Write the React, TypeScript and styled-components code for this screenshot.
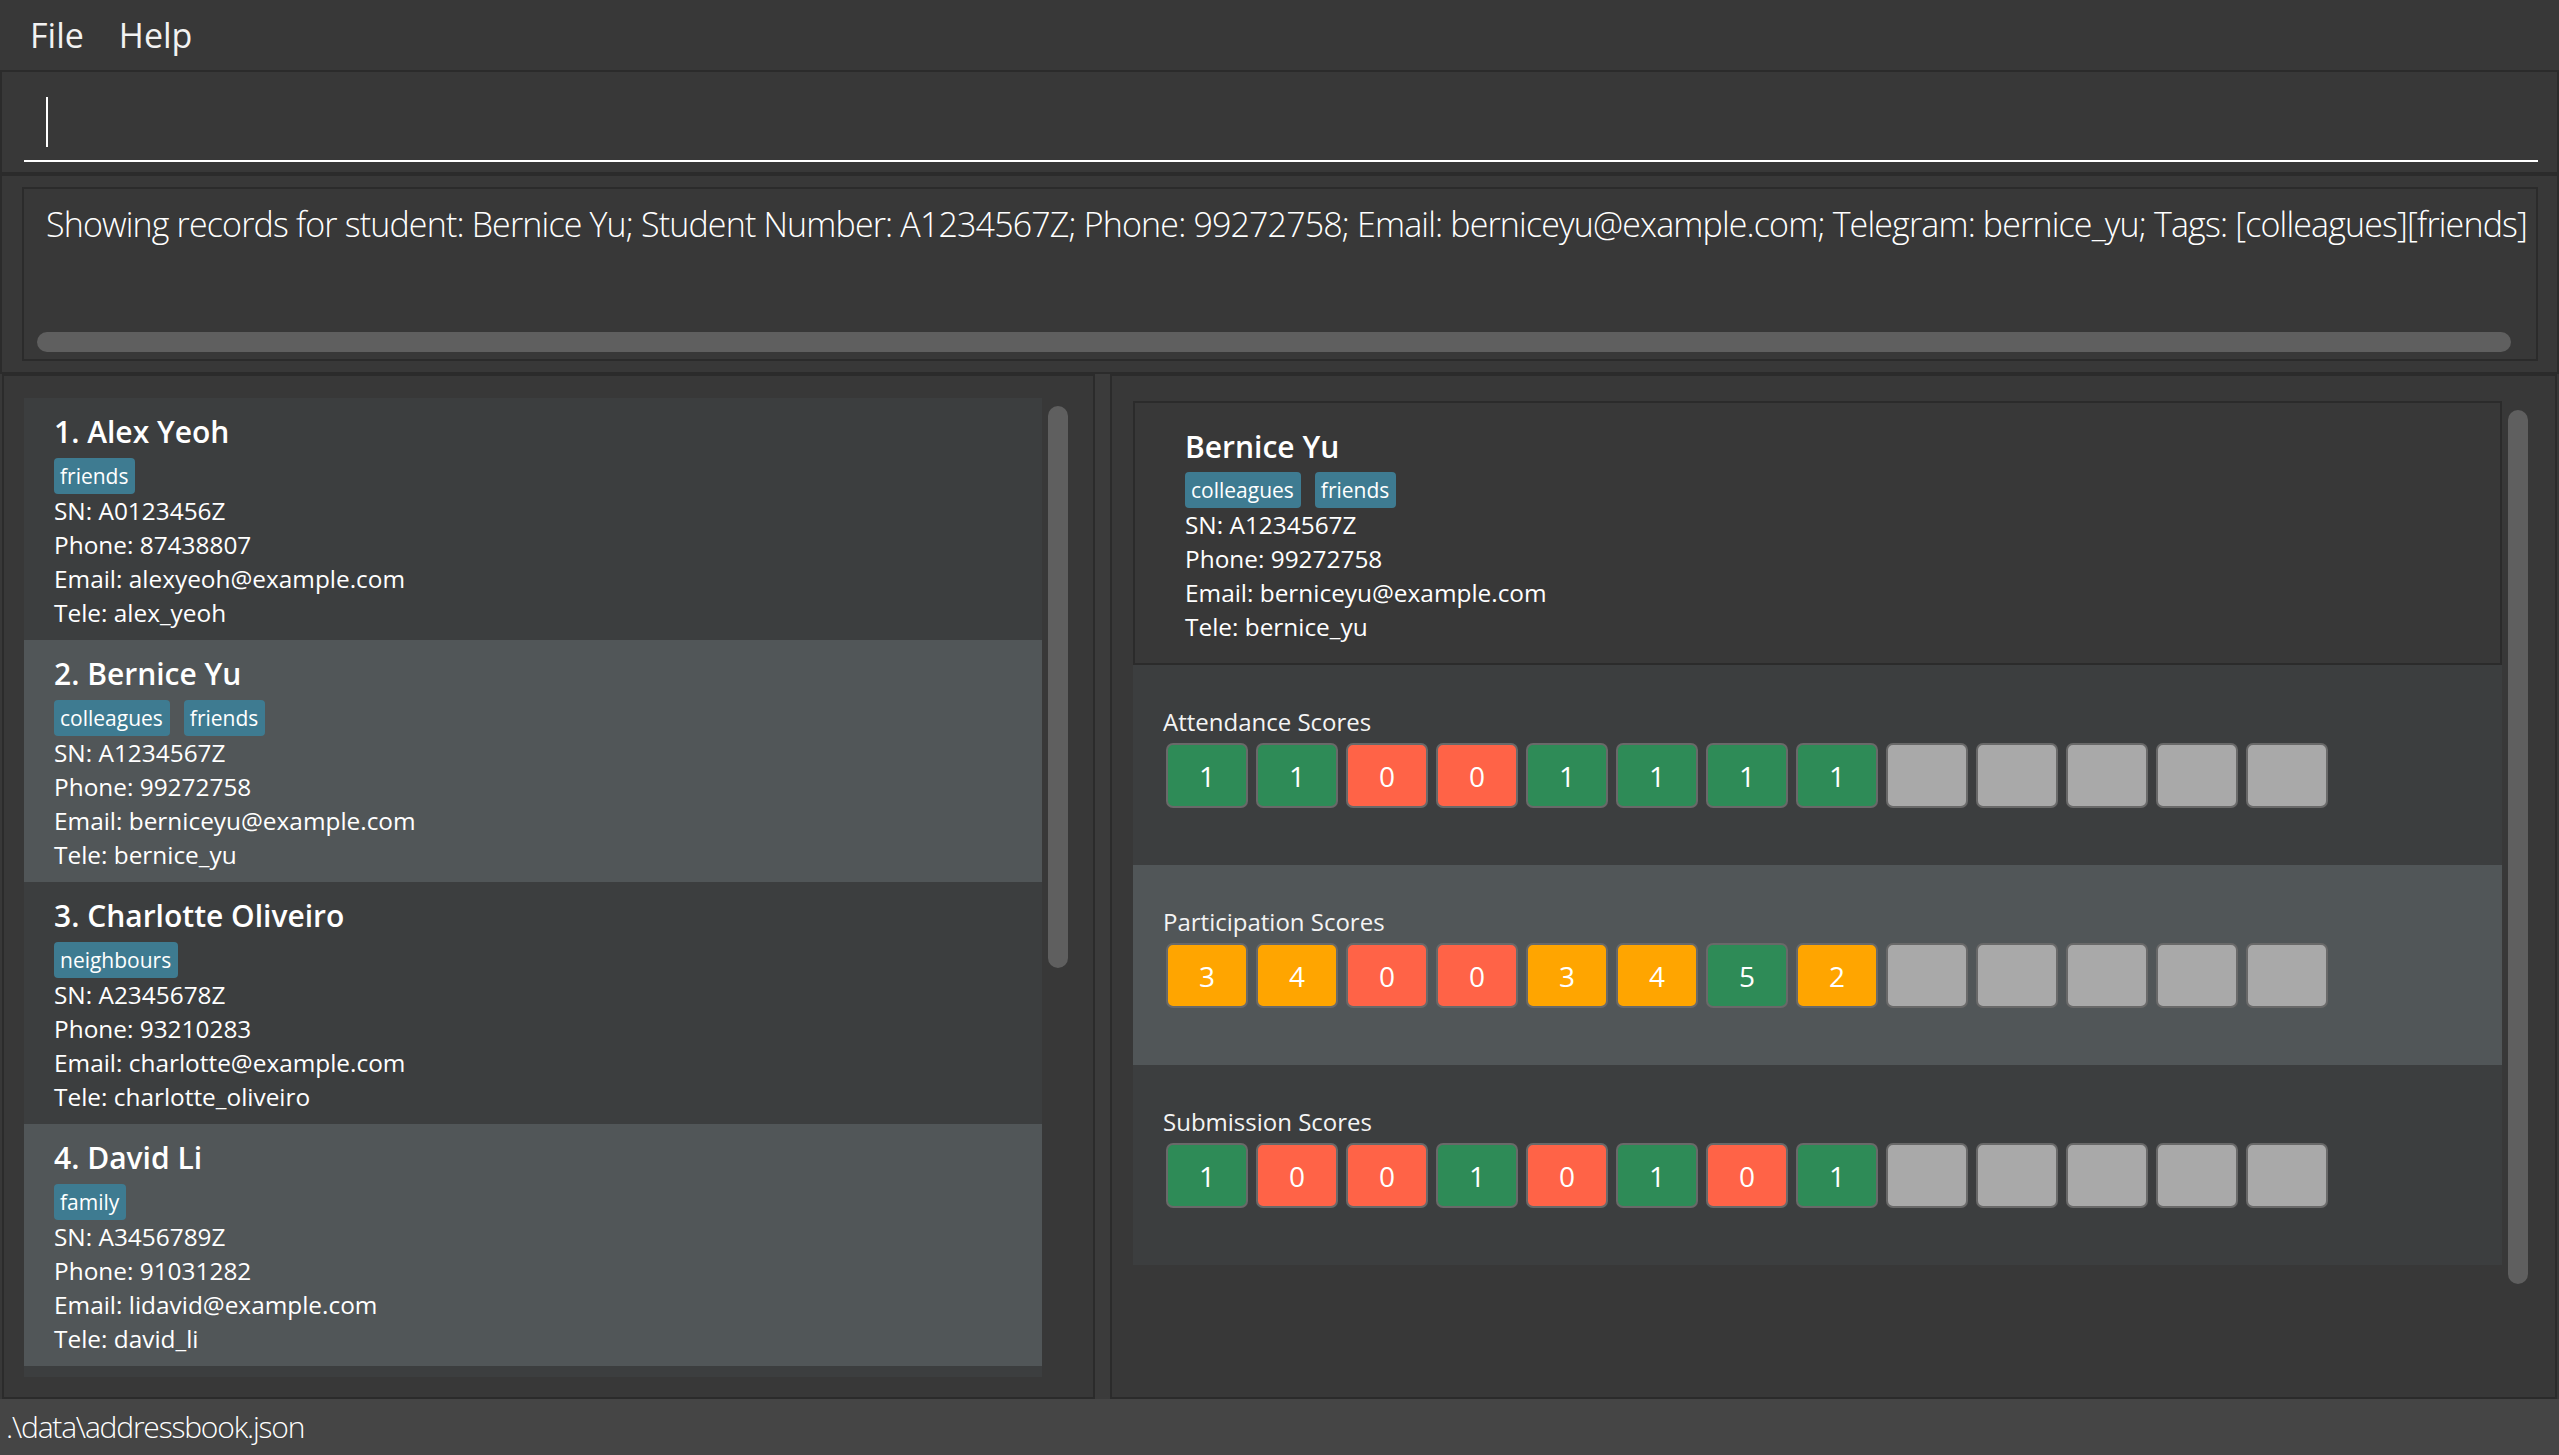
import React from "react";
import styled, { createGlobalStyle } from "styled-components";

const GlobalStyle = createGlobalStyle`
  html, body {
    margin: 0;
    padding: 0;
    background: #383838;
  }
  body {
    font-family: "Open Sans", "Noto Sans", sans-serif;
    color: #ffffff;
  }
  #root {
    height: 100vh;
  }
`;

const Window = styled.div`
  display: flex;
  flex-direction: column;
  width: 100vw;
  height: 100vh;
  background: #383838;
  overflow: hidden;
`;

const MenuBar = styled.div`
  height: 70px;
  flex-shrink: 0;
  display: flex;
  align-items: center;
  padding-left: 13px;
  background: #383838;
`;

const MenuItem = styled.span`
  padding: 0 18px 0 17px;
  font-size: 34px;
  line-height: 34px;
  color: #f2f2f2;
`;

const Pane = styled.div`
  box-sizing: border-box;
  border: 2px solid #2b2b2b;
  background: #383838;
`;

const CommandPane = styled(Pane)`
  height: 104px;
  flex-shrink: 0;
  padding: 16px 19px 10px 22px;
`;

const CommandField = styled.div`
  box-sizing: border-box;
  height: 74px;
  border-bottom: 2px solid #ffffff;
  padding: 9px 0 0 22px;
`;

const Caret = styled.div`
  width: 2px;
  height: 50px;
  background: #ffffff;
`;

const ResultPane = styled(Pane)`
  height: 200px;
  flex-shrink: 0;
  padding: 11px 19px 11px 20px;
`;

const ResultBox = styled.div`
  box-sizing: border-box;
  height: 100%;
  border: 2px solid #2b2b2b;
  display: flex;
  flex-direction: column;
  overflow: hidden;
`;

const ResultText = styled.div`
  flex: 1;
  padding: 13px 0 0 22px;
  font-weight: 300;
  font-size: 34px;
  letter-spacing: -0.85px;
  line-height: 44px;
  white-space: nowrap;
  color: #ffffff;
`;

const HScroll = styled.div`
  height: 20px;
  margin: 0 25px 7px 13px;
  border-radius: 10px;
  background: #5f5f5f;
`;

const Main = styled.div`
  flex: 1;
  display: flex;
  padding: 0 2px;
  min-height: 0;
`;

const LeftPane = styled(Pane)`
  width: 1093px;
  flex-shrink: 0;
  display: flex;
  gap: 6px;
  padding: 22px 25px 20px 20px;
`;

const Divider = styled.div`
  width: 15px;
  flex-shrink: 0;
  background: #3b3b3b;
`;

const RightPane = styled(Pane)`
  flex: 1;
  display: flex;
  gap: 6px;
  padding: 25px 27px 20px 21px;
  min-width: 0;
`;

const ScrollCol = styled.div`
  width: 20px;
  flex-shrink: 0;
`;

const Thumb = styled.div<{ $top: number; $len: number }>`
  margin-top: ${(p) => p.$top}px;
  height: ${(p) => p.$len}px;
  border-radius: 10px;
  background: #5f5f5f;
`;

const PersonList = styled.div`
  flex: 1;
  display: flex;
  flex-direction: column;
  overflow: hidden;
  background: #3c3e3f;
`;

const Card = styled.div<{ $odd: boolean }>`
  flex-shrink: 0;
  box-sizing: border-box;
  height: 242px;
  padding: 13px 30px 0 30px;
  background: ${(p) => (p.$odd ? "#515658" : "#3c3e3f")};
`;

const Name = styled.div<{ $gap: number }>`
  font-weight: 600;
  font-size: 30px;
  line-height: 41px;
  margin-bottom: ${(p) => p.$gap}px;
  color: #ffffff;
  white-space: nowrap;
`;

const TagRow = styled.div`
  display: flex;
  gap: 14px;
  height: 36px;
`;

const Tag = styled.span`
  height: 36px;
  line-height: 36px;
  padding: 0 7px 0 6px;
  font-size: 21px;
  background: #3e7b91;
  border-radius: 4px;
  color: #ffffff;
`;

const Info = styled.div`
  font-size: 24.4px;
  line-height: 34px;
  color: #ffffff;
  white-space: nowrap;
`;

const DetailColumn = styled.div`
  flex: 1;
  display: flex;
  flex-direction: column;
  min-width: 0;
`;

const DetailCard = styled.div`
  box-sizing: border-box;
  border: 2px solid #2b2b2b;
  padding: 23px 20px 19px 50px;
  background: #383838;
`;

const ScoreSection = styled.div<{ $odd: boolean }>`
  box-sizing: border-box;
  height: 200px;
  padding-top: 40px;
  background: ${(p) => (p.$odd ? "#515658" : "#3c3e3f")};
`;

const SectionLabel = styled.div`
  padding-left: 30px;
  font-size: 24px;
  line-height: 34px;
  color: #f4f4f4;
`;

const BoxRow = styled.div`
  display: flex;
  gap: 8px;
  margin-top: 4px;
  padding-left: 33px;
`;

const ScoreBox = styled.div<{ $bg: string }>`
  box-sizing: border-box;
  width: 82px;
  height: 65px;
  border: 2px solid #696969;
  border-radius: 7px;
  background: ${(p) => p.$bg};
  display: flex;
  align-items: center;
  justify-content: center;
  font-size: 28px;
  color: #ffffff;
`;

const StatusBar = styled.div`
  height: 56px;
  flex-shrink: 0;
  display: flex;
  align-items: center;
  padding-left: 6px;
  background: #454545;
  font-weight: 300;
  font-size: 30px;
  letter-spacing: -1.2px;
  line-height: 56px;
  color: #ffffff;
`;

type Person = {
  name: string;
  tags: string[];
  sn: string;
  phone: string;
  email: string;
  tele: string;
};

const persons: Person[] = [
  { name: "Alex Yeoh", tags: ["friends"], sn: "A0123456Z", phone: "87438807", email: "alexyeoh@example.com", tele: "alex_yeoh" },
  { name: "Bernice Yu", tags: ["colleagues", "friends"], sn: "A1234567Z", phone: "99272758", email: "berniceyu@example.com", tele: "bernice_yu" },
  { name: "Charlotte Oliveiro", tags: ["neighbours"], sn: "A2345678Z", phone: "93210283", email: "charlotte@example.com", tele: "charlotte_oliveiro" },
  { name: "David Li", tags: ["family"], sn: "A3456789Z", phone: "91031282", email: "lidavid@example.com", tele: "david_li" },
];

const NA = null;
const attendance = [1, 1, 0, 0, 1, 1, 1, 1, NA, NA, NA, NA, NA];
const participation = [3, 4, 0, 0, 3, 4, 5, 2, NA, NA, NA, NA, NA];
const submission = [1, 0, 0, 1, 0, 1, 0, 1, NA, NA, NA, NA, NA];

const binaryColor = (v: number | null) => (v === null ? "#a9a9a9" : v > 0 ? "#2e8b57" : "#ff6347");
const partColor = (v: number | null) =>
  v === null ? "#a9a9a9" : v === 0 ? "#ff6347" : v >= 5 ? "#2e8b57" : "#ffa500";

const sections: { label: string; values: (number | null)[]; color: (v: number | null) => string }[] = [
  { label: "Attendance Scores", values: attendance, color: binaryColor },
  { label: "Participation Scores", values: participation, color: partColor },
  { label: "Submission Scores", values: submission, color: binaryColor },
];

const PersonDetails: React.FC<{ p: Person }> = ({ p }) => (
  <>
    <TagRow>
      {p.tags.map((t) => (
        <Tag key={t}>{t}</Tag>
      ))}
    </TagRow>
    <Info>SN: {p.sn}</Info>
    <Info>Phone: {p.phone}</Info>
    <Info>Email: {p.email}</Info>
    <Info>Tele: {p.tele}</Info>
  </>
);

export default function App() {
  const selected = persons[1];
  return (
    <Window>
      <GlobalStyle />
      <MenuBar>
        <MenuItem>File</MenuItem>
        <MenuItem>Help</MenuItem>
      </MenuBar>
      <CommandPane>
        <CommandField>
          <Caret />
        </CommandField>
      </CommandPane>
      <ResultPane>
        <ResultBox>
          <ResultText>
            Showing records for student: Bernice Yu; Student Number: A1234567Z; Phone: 99272758; Email:
            berniceyu@example.com; Telegram: bernice_yu; Tags: [colleagues][friends]
          </ResultText>
          <HScroll />
        </ResultBox>
      </ResultPane>
      <Main>
        <LeftPane>
          <PersonList>
            {persons.map((p, i) => (
              <Card key={p.name} $odd={i % 2 === 1}>
                <Name $gap={6}>
                  {i + 1}. {p.name}
                </Name>
                <PersonDetails p={p} />
              </Card>
            ))}
          </PersonList>
          <ScrollCol>
            <Thumb $top={8} $len={562} />
          </ScrollCol>
        </LeftPane>
        <Divider />
        <RightPane>
          <DetailColumn>
            <DetailCard>
              <Name $gap={5}>{selected.name}</Name>
              <PersonDetails p={selected} />
            </DetailCard>
            {sections.map((s, i) => (
              <ScoreSection key={s.label} $odd={i % 2 === 1}>
                <SectionLabel>{s.label}</SectionLabel>
                <BoxRow>
                  {s.values.map((v, j) => (
                    <ScoreBox key={j} $bg={s.color(v)}>
                      {v === null ? "" : v}
                    </ScoreBox>
                  ))}
                </BoxRow>
              </ScoreSection>
            ))}
          </DetailColumn>
          <ScrollCol>
            <Thumb $top={9} $len={874} />
          </ScrollCol>
        </RightPane>
      </Main>
      <StatusBar>.\data\addressbook.json</StatusBar>
    </Window>
  );
}
